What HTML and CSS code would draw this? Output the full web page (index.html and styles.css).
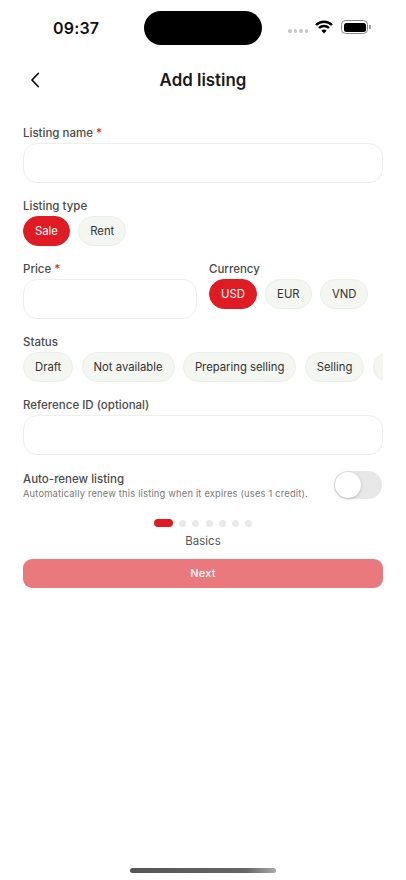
FILE: index.html
```html
<!DOCTYPE html>
<html lang="en">
<head>
<meta charset="utf-8">
<title>Add listing</title>
<link rel="stylesheet" href="styles.css">
</head>
<body>
<div class="screen">
  <div class="statusbar">
    <span class="time">09:37</span>
    <div class="island"></div>
    <div class="sysicons">
      <span class="signal"><i></i><i></i><i></i><i></i></span>
      <svg class="wifi" width="18" height="14" viewBox="0 0 18 14"><path d="M1 5a11.4 11.4 0 0 1 16 0" fill="none" stroke="#000" stroke-width="2.4"/><path d="M4 8a7.2 7.2 0 0 1 10 0" fill="none" stroke="#000" stroke-width="2.4"/><path d="M6.3 10.6 9 13.6l2.7-3a3.6 3.6 0 0 0-5.4 0z" fill="#000"/></svg>
      <span class="battery"><span class="battery-fill"></span></span>
      <span class="battery-cap"></span>
    </div>
  </div>
  <header class="header">
    <svg class="back" width="12" height="18" viewBox="0 0 12 18"><path d="M9.2 2.5 3 9l6.2 6.5" fill="none" stroke="#111" stroke-width="1.8" stroke-linecap="round" stroke-linejoin="round"/></svg>
    <h1 class="title">Add listing</h1>
  </header>
  <main class="form">
    <div class="field name-field">
      <label class="label">Listing name <span class="req">*</span></label>
      <div class="input"></div>
    </div>
    <div class="field">
      <label class="label">Listing type</label>
      <div class="chips">
        <span class="chip on">Sale</span>
        <span class="chip">Rent</span>
      </div>
    </div>
    <div class="price-row">
      <div class="field price-col">
        <label class="label">Price <span class="req">*</span></label>
        <div class="input"></div>
      </div>
      <div class="field">
        <label class="label">Currency</label>
        <div class="chips">
          <span class="chip on">USD</span>
          <span class="chip">EUR</span>
          <span class="chip">VND</span>
        </div>
      </div>
    </div>
    <div class="field">
      <label class="label">Status</label>
      <div class="chips scroller">
        <span class="chip">Draft</span>
        <span class="chip">Not available</span>
        <span class="chip">Preparing selling</span>
        <span class="chip">Selling</span>
        <span class="chip chip-empty"></span>
      </div>
    </div>
    <div class="field">
      <label class="label">Reference ID (optional)</label>
      <div class="input"></div>
    </div>
    <div class="renew">
      <div class="renew-text">
        <div class="renew-title">Auto-renew listing</div>
        <div class="renew-sub">Automatically renew this listing when it expires (uses 1 credit).</div>
      </div>
      <div class="toggle"><span class="knob"></span></div>
    </div>
    <div class="dots">
      <span class="dot active"></span><span class="dot"></span><span class="dot"></span><span class="dot"></span><span class="dot"></span><span class="dot"></span><span class="dot"></span>
    </div>
    <div class="step">Basics</div>
    <button class="next">Next</button>
  </main>
  <div class="home"></div>
</div>
</body>
</html>
```
FILE: styles.css
```css
* { box-sizing: border-box; }
html, body { margin: 0; padding: 0; background: #fff; }
body { font-family: Inter, "Liberation Sans", sans-serif; color: #2b2b2b; }
.screen { width: 406px; height: 880px; position: relative; overflow: hidden; display: flex; flex-direction: column; }

.statusbar { height: 56px; flex: none; position: relative; }
.time { position: absolute; left: 53px; top: 17px; font-size: 16px; line-height: 22px; font-weight: 600; color: #111; letter-spacing: 0.2px; }
.island { position: absolute; left: 144px; top: 11px; width: 118px; height: 34px; border-radius: 17px; background: #000; }
.sysicons { position: absolute; left: 288px; top: 19px; height: 16px; display: flex; align-items: center; }
.signal { display: flex; gap: 2px; margin-top: 8px; }
.signal i { width: 3.5px; height: 3.5px; border-radius: 50%; background: #c9c9c9; display: block; }
.wifi { margin-left: 7px; }
.battery { margin-left: 8px; width: 27px; height: 14px; border: 1px solid #888; border-radius: 4.5px; padding: 1.5px; display: block; }
.battery-fill { display: block; height: 100%; background: #000; border-radius: 2.5px; }
.battery-cap { width: 1.5px; height: 4px; background: #999; margin-left: 1px; border-radius: 0 1px 1px 0; }

.header { height: 48px; flex: none; position: relative; display: flex; align-items: center; justify-content: center; }
.back { position: absolute; left: 29px; top: 15px; }
.title { margin: 0; font-size: 16.9px; line-height: 24px; font-weight: 600; color: #1a1a1a; }

.form { padding: 0 23px; display: flex; flex-direction: column; }
.field { display: flex; flex-direction: column; margin-bottom: 14px; }
.name-field { margin-top: 20px; }
.label { font-size: 11.5px; line-height: 18px; font-weight: 500; color: #4a4a4a; letter-spacing: 0; margin-bottom: 1px; height: 18px; }
.req { color: #e01b24; }
.input { height: 40px; border: 1.5px solid #eeeeec; border-radius: 14px; background: #fff; }

.chips { display: flex; gap: 8.3px; }
.chip { flex: none; height: 30px; padding: 0 11px; border-radius: 15px; border: 1px solid #ecefe9; background: #f4f6f1; color: #333; font-size: 11.3px; line-height: 28px; }
.chip.on { background: #e01b24; border-color: #e01b24; color: #fff; }
.chip-empty { width: 50px; }
.scroller { overflow: hidden; }

.price-row { display: flex; gap: 12px; }
.price-col { width: 174px; flex: none; }

.renew { display: flex; justify-content: space-between; align-items: flex-start; margin-top: 2px; }
.renew-title { font-size: 11.5px; line-height: 16px; font-weight: 500; color: #4a4a4a; }
.renew-sub { font-size: 9.3px; line-height: 13px; color: #777; letter-spacing: 0.2px; }
.toggle { width: 48px; height: 28px; margin-right: 1px; border-radius: 14px; background: #e7e7e7; position: relative; flex: none; }
.knob { position: absolute; left: 1px; top: 1px; width: 26px; height: 26px; border-radius: 50%; background: #fff; box-shadow: 0 1px 3px rgba(0,0,0,.22); }

.dots { display: flex; justify-content: center; gap: 6.3px; margin-top: 19px; height: 8px; }
.dot { width: 7px; height: 7px; margin-top: .5px; border-radius: 50%; background: #e9e9e9; }
.dot.active { width: 19px; height: 8px; margin-top: 0; border-radius: 4px; background: #e01b24; }
.step { text-align: center; font-size: 11.5px; line-height: 18px; margin-top: 5px; color: #555; }
.next { display: block; width: 100%; height: 28.5px; margin-top: 9px; border: 0; border-radius: 9px; background: #e9797d; color: #fff; font-family: inherit; font-size: 11px; font-weight: 500; letter-spacing: 0.2px; }

.home { position: absolute; left: 130px; top: 867.5px; width: 146px; height: 5px; border-radius: 3px; background: linear-gradient(90deg, #555 0%, #666 80%, #aaa 100%); }
```
